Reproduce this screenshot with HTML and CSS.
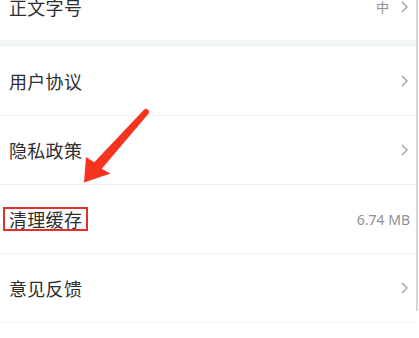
FILE: index.html
```html
<!DOCTYPE html>
<html lang="zh-CN">
<head>
<meta charset="utf-8">
<link rel="stylesheet" href="styles.css">
</head>
<body>
<div class="page">
  <div class="row first">
    <span class="label">正文字号</span>
    <span class="right"><span class="value small">中</span><svg class="chev" viewBox="0 0 7 12"><polyline points="1,1 6,6 1,11"/></svg></span>
  </div>
  <div class="gap"></div>
  <div class="row">
    <span class="label">用户协议</span>
    <span class="right"><svg class="chev" viewBox="0 0 7 12"><polyline points="1,1 6,6 1,11"/></svg></span>
  </div>
  <div class="row">
    <span class="label">隐私政策</span>
    <span class="right"><svg class="chev" viewBox="0 0 7 12"><polyline points="1,1 6,6 1,11"/></svg></span>
  </div>
  <div class="row">
    <span class="label boxed">清理缓存</span>
    <span class="right"><span class="value size">6.74 MB</span></span>
  </div>
  <div class="row last">
    <span class="label">意见反馈</span>
    <span class="right"><svg class="chev" viewBox="0 0 7 12"><polyline points="1,1 6,6 1,11"/></svg></span>
  </div>
  <svg class="arrow" width="419" height="338" viewBox="0 0 419 338">
    <path d="M143.75,137 L94.25,189.2 L86,184 L84,209.5 L110.5,200.5 L101.75,195.8 L148.25,141 A3,3 0 0 0 143.75,137 Z"/>
  </svg>
</div>
</body>
</html>
```
FILE: styles.css
```css
html, body {
  margin: 0;
  padding: 0;
  background: #ffffff;
}
body {
  width: 419px;
  height: 338px;
  overflow: hidden;
  font-family: "Noto Sans CJK SC", "Noto Sans", sans-serif;
}
.page {
  position: relative;
  width: 416px;
  height: 338px;
  border-right: 2px solid #d6d6d6;
  box-sizing: content-box;
}
.row {
  height: 69px;
  box-sizing: border-box;
  border-bottom: 1px solid #eef0f0;
  display: flex;
  align-items: center;
  justify-content: space-between;
  padding: 0 8px 0 3px;
}
.row.first {
  margin-top: -27px;
  height: 67px;
  border-bottom: none;
}
.row.last {
  border-bottom-color: #f5f6f6;
}
.gap {
  height: 7px;
  background: #f3f6f6;
}
.label {
  font-size: 18px;
  line-height: 20px;
  color: #2e2e2e;
  padding: 0 4px;
  border: 2px solid transparent;
  letter-spacing: 0.3px;
}
.label.boxed {
  border-color: #e2302f;
}
.right {
  display: flex;
  align-items: center;
  gap: 12px;
}
.value {
  color: #8f8f8f;
}
.value.small {
  font-size: 13px;
}
.value.size {
  font-family: "Noto Sans", sans-serif;
  font-size: 14px;
  margin-right: -2px;
}
.chev {
  width: 7px;
  height: 12px;
  display: block;
}
.chev polyline {
  fill: none;
  stroke: #a0a0a0;
  stroke-width: 1.4;
}
.arrow {
  position: absolute;
  left: 0;
  top: 0;
  pointer-events: none;
}
.arrow path {
  fill: #f5331f;
}
```
